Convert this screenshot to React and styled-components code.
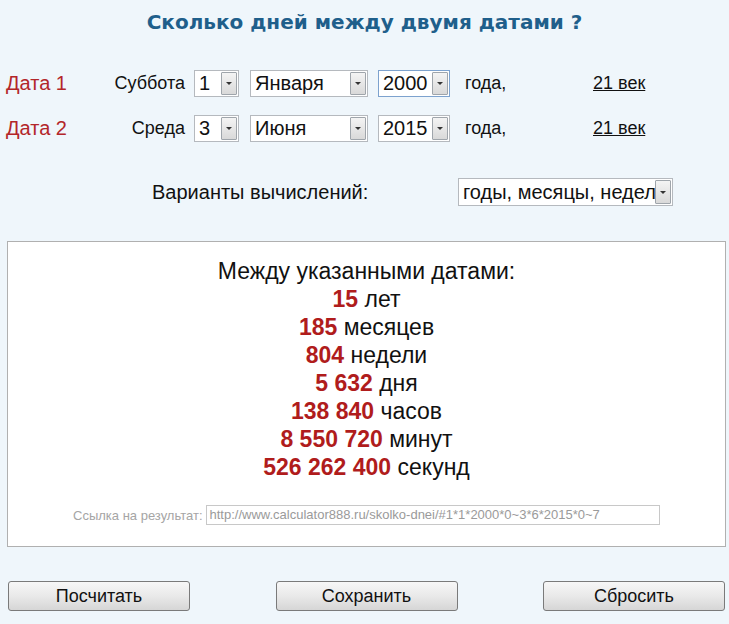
import React from "react";
import styled, { createGlobalStyle } from "styled-components";

const GlobalStyle = createGlobalStyle`
  html, body {
    margin: 0;
    padding: 0;
    background: #eff6fb;
  }
  body {
    font-family: "Liberation Sans", Arial, sans-serif;
    color: #111;
  }
`;

const Page = styled.div`
  width: 729px;
  height: 624px;
  overflow: hidden;
  background: #eff6fb;
`;

const Title = styled.h1`
  margin: 0;
  height: 44px;
  line-height: 44px;
  text-align: center;
  font-family: "DejaVu Sans", Verdana, sans-serif;
  font-size: 20px;
  font-weight: bold;
  color: #1f5f8b;
`;

const DateRows = styled.div`
  display: flex;
  flex-direction: column;
  gap: 18px;
  margin-top: 26px;
  padding-left: 6px;
`;

const DateRow = styled.div`
  display: flex;
  align-items: center;
  height: 27px;
  font-size: 18px;
`;

const DateLabel = styled.span`
  width: 100px;
  color: #b3262a;
  font-size: 20px;
`;

const DayName = styled.span`
  width: 79px;
  text-align: right;
  margin-right: 9px;
`;

const SelectBox = styled.div`
  box-sizing: border-box;
  display: flex;
  align-items: center;
  width: ${({ $w }) => $w}px;
  height: ${({ $h }) => $h || 27}px;
  margin-right: ${({ $mr }) => $mr || 0}px;
  background: #fff;
  border: 1px solid ${({ $focus }) => ($focus ? "#7da2ce" : "#b5b9be")};
  padding: 1px 1px 1px 4px;
  font-size: ${({ $fs }) => $fs || 20}px;
`;

const SelectValue = styled.span`
  flex: 1;
  white-space: nowrap;
  overflow: hidden;
`;

const Arrow = styled.span`
  box-sizing: border-box;
  width: 16px;
  flex-shrink: 0;
  align-self: stretch;
  display: flex;
  align-items: center;
  justify-content: center;
  border: 1px solid #9fa5ab;
  border-radius: 1px;
  background: linear-gradient(#f4f4f4, #d9d9d9);
  &::after {
    content: "";
    border-left: 3px solid transparent;
    border-right: 3px solid transparent;
    border-top: 3px solid #333;
  }
`;

const Goda = styled.span`
  width: 128px;
`;

const CenturyLink = styled.a`
  color: #111;
  text-decoration: underline;
  font-size: 18px;
`;

const VariantRow = styled.div`
  display: flex;
  align-items: center;
  margin-top: 36px;
  padding-left: 152px;
  height: 28px;
  font-size: 20px;
`;

const VariantLabel = styled.span`
  width: 306px;
`;

const ResultBox = styled.div`
  box-sizing: border-box;
  margin: 35px 0 0 7px;
  width: 719px;
  height: 306px;
  background: #fff;
  border: 1px solid #b0b0b0;
  padding-top: 15px;
  text-align: center;
`;

const Line = styled.div`
  height: 28px;
  line-height: 28px;
  font-size: 23px;
`;

const Num = styled.b`
  color: #b01c1c;
`;

const LinkRow = styled.div`
  display: flex;
  align-items: center;
  margin-top: 24px;
  padding-left: 65px;
  gap: 3px;
  font-size: 13px;
  color: #a5a5a5;
`;

const LinkInput = styled.div`
  box-sizing: border-box;
  width: 454px;
  height: 20px;
  line-height: 18px;
  border: 1px solid #c8c8c8;
  padding-left: 3px;
  text-align: left;
  color: #9a9a9a;
  font-size: 13px;
  white-space: nowrap;
  overflow: hidden;
`;

const Buttons = styled.div`
  display: flex;
  justify-content: space-between;
  margin: 34px 4px 0 8px;
`;

const Button = styled.button`
  box-sizing: border-box;
  width: 182px;
  height: 30px;
  border: 1px solid #7a7a7a;
  border-radius: 3px;
  background: linear-gradient(#f7f7f7 0%, #e9e9e9 50%, #d6d6d6 100%);
  font-family: "Liberation Sans", Arial, sans-serif;
  font-size: 18px;
  color: #111;
  padding: 0;
`;

function Select({ value, width, focus, mr, h, fs }) {
  return (
    <SelectBox $w={width} $focus={focus} $mr={mr} $h={h} $fs={fs}>
      <SelectValue>{value}</SelectValue>
      <Arrow />
    </SelectBox>
  );
}

const rows = [
  { label: "Дата 1", day: "Суббота", d: "1", m: "Января", y: "2000", focus: true },
  { label: "Дата 2", day: "Среда", d: "3", m: "Июня", y: "2015", focus: false },
];

const results = [
  ["15", "лет"],
  ["185", "месяцев"],
  ["804", "недели"],
  ["5 632", "дня"],
  ["138 840", "часов"],
  ["8 550 720", "минут"],
  ["526 262 400", "секунд"],
];

export default function App() {
  return (
    <Page>
      <GlobalStyle />
      <Title>Сколько дней между двумя датами ?</Title>
      <DateRows>
        {rows.map((r) => (
          <DateRow key={r.label}>
            <DateLabel>{r.label}</DateLabel>
            <DayName>{r.day}</DayName>
            <Select value={r.d} width={45} mr={11} />
            <Select value={r.m} width={118} mr={10} />
            <Select value={r.y} width={72} mr={15} focus={r.focus} />
            <Goda>года,</Goda>
            <CenturyLink>21 век</CenturyLink>
          </DateRow>
        ))}
      </DateRows>
      <VariantRow>
        <VariantLabel>Варианты вычислений:</VariantLabel>
        <Select value="годы, месяцы, недели" width={215} h={28} fs={20} />
      </VariantRow>
      <ResultBox>
        <Line>Между указанными датами:</Line>
        {results.map(([n, u]) => (
          <Line key={u}>
            <Num>{n}</Num> {u}
          </Line>
        ))}
        <LinkRow>
          <span>Ссылка на результат:</span>
          <LinkInput>http://www.calculator888.ru/skolko-dnei/#1*1*2000*0~3*6*2015*0~7</LinkInput>
        </LinkRow>
      </ResultBox>
      <Buttons>
        <Button>Посчитать</Button>
        <Button>Сохранить</Button>
        <Button>Сбросить</Button>
      </Buttons>
    </Page>
  );
}
